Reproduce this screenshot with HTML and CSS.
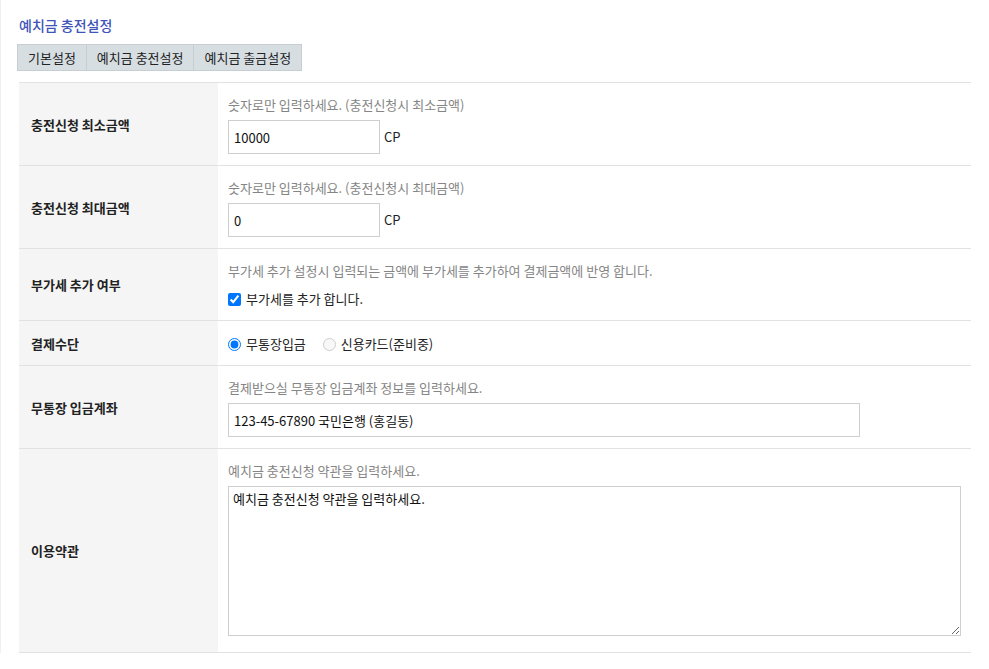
FILE: index.html
```html
<!DOCTYPE html>
<html>

<head>
    <title>예치금 충전설정</title>
    <link rel="stylesheet" href="styles.css">
</head>

<body>
    <div id="wrap">
        <h2 id="pageTitle">예치금 충전설정</h2>

        <ul class="tabs">
            <li>기본설정</li>
            <li class="active">예치금 충전설정</li>
            <li>예치금 출금설정</li>
        </ul>

        <form id="chargeForm" method="POST" action="/deposit/charge">
            <table class="setTable">
                <tr>
                    <th>충전신청 최소금액</th>
                    <td>
                        <p class="help">숫자로만 입력하세요. (충전신청시 최소금액)</p>
                        <div class="field">
                            <input type="text" name="min_amount" class="inputData short" value="10000" />
                            <span class="unit">CP</span>
                        </div>
                    </td>
                </tr>
                <tr>
                    <th>충전신청 최대금액</th>
                    <td>
                        <p class="help">숫자로만 입력하세요. (충전신청시 최대금액)</p>
                        <div class="field">
                            <input type="text" name="max_amount" class="inputData short" value="0" />
                            <span class="unit">CP</span>
                        </div>
                    </td>
                </tr>
                <tr>
                    <th>부가세 추가 여부</th>
                    <td>
                        <p class="help">부가세 추가 설정시 입력되는 금액에 부가세를 추가하여 결제금액에 반영 합니다.</p>
                        <div class="checkRow">
                            <label class="check"><input type="checkbox" name="use_vat" checked="true" /> 부가세를 추가 합니다.</label>
                        </div>
                    </td>
                </tr>
                <tr>
                    <th>결제수단</th>
                    <td class="radioCell">
                        <label class="check"><input type="radio" name="pay_method" value="bank" checked="true" /> 무통장입금</label>
                        <label class="check"><input type="radio" name="pay_method" value="card" disabled="true" /> 신용카드(준비중)</label>
                    </td>
                </tr>
                <tr>
                    <th>무통장 입금계좌</th>
                    <td>
                        <p class="help">결제받으실 무통장 입금계좌 정보를 입력하세요.</p>
                        <div class="field">
                            <input type="text" name="bank_account" class="inputData long" value="123-45-67890 국민은행 (홍길동)" />
                        </div>
                    </td>
                </tr>
                <tr>
                    <th>이용약관</th>
                    <td class="lastCell">
                        <p class="help">예치금 충전신청 약관을 입력하세요.</p>
                        <textarea name="terms" class="inputData" id="terms">예치금 충전신청 약관을 입력하세요.</textarea>
                    </td>
                </tr>
            </table>
        </form>
    </div>
</body>

</html>
```

FILE: styles.css
```css
html, body {
    margin: 0;
    padding: 0;
    background-color: white;
}

body {
    font-family: "Noto Sans CJK KR", "Noto Sans", sans-serif;
    font-size: 13px;
    color: #222;
    border-left: 1px solid #f0f0f0;
}

#wrap {
    padding: 16px 19px 0 16px;
}

#pageTitle {
    margin: 0 0 10px 2px;
    font-size: 14px;
    font-weight: 500;
    line-height: 18px;
    color: #4155b8;
}

.tabs {
    display: flex;
    margin: 0;
    padding: 0;
    list-style: none;
    width: fit-content;
    border: 1px solid #c6ced3;
    background-color: #d6dee2;
}

.tabs li {
    padding: 0 10px;
    line-height: 25px;
    font-size: 13px;
    color: #222;
    border-left: 1px solid #c6ced3;
}

.tabs li:first-child {
    border-left: 0;
}

.setTable {
    width: 952px;
    margin: 11px 0 0 2px;
    border-collapse: collapse;
    border-top: 1px solid #e2e2e2;
}

.setTable th {
    width: 188px;
    padding: 0 0 0 12px;
    text-align: left;
    font-size: 13px;
    font-weight: bold;
    background-color: #f5f5f5;
    border-bottom: 1px solid #e2e2e2;
}

.setTable td {
    padding: 12px 10px 11px 10px;
    border-bottom: 1px solid #e2e2e2;
    line-height: 20px;
}

.setTable td.radioCell {
    padding-top: 13px;
}

.setTable td.lastCell {
    padding-bottom: 16px;
}

.help {
    margin: 0 0 5px 0;
    line-height: 20px;
    color: #858585;
}

.field {
    display: flex;
    align-items: center;
    gap: 4px;
    height: 34px;
}

.inputData {
    box-sizing: border-box;
    height: 34px;
    padding: 0 5px;
    border: 1px solid #cfcfcf;
    font-family: "Noto Sans CJK KR", "Noto Sans", sans-serif;
    font-size: 13px;
    color: #111;
    outline: 0;
}

.inputData.short {
    width: 152px;
}

.inputData.long {
    width: 632px;
}

.inputData#terms {
    display: block;
    width: 733px;
    height: 150px;
    padding: 3px 4px;
    line-height: 18px;
    resize: vertical;
}

.unit {
    margin-top: -1px;
}

.checkRow {
    display: flex;
    height: 20px;
    margin-top: 8px;
}

.check {
    display: inline-flex;
    align-items: center;
    height: 20px;
    margin-right: 14px;
    vertical-align: top;
}

.check input {
    margin: 0 5px 0 0;
    width: 13px;
    height: 13px;
}
```
